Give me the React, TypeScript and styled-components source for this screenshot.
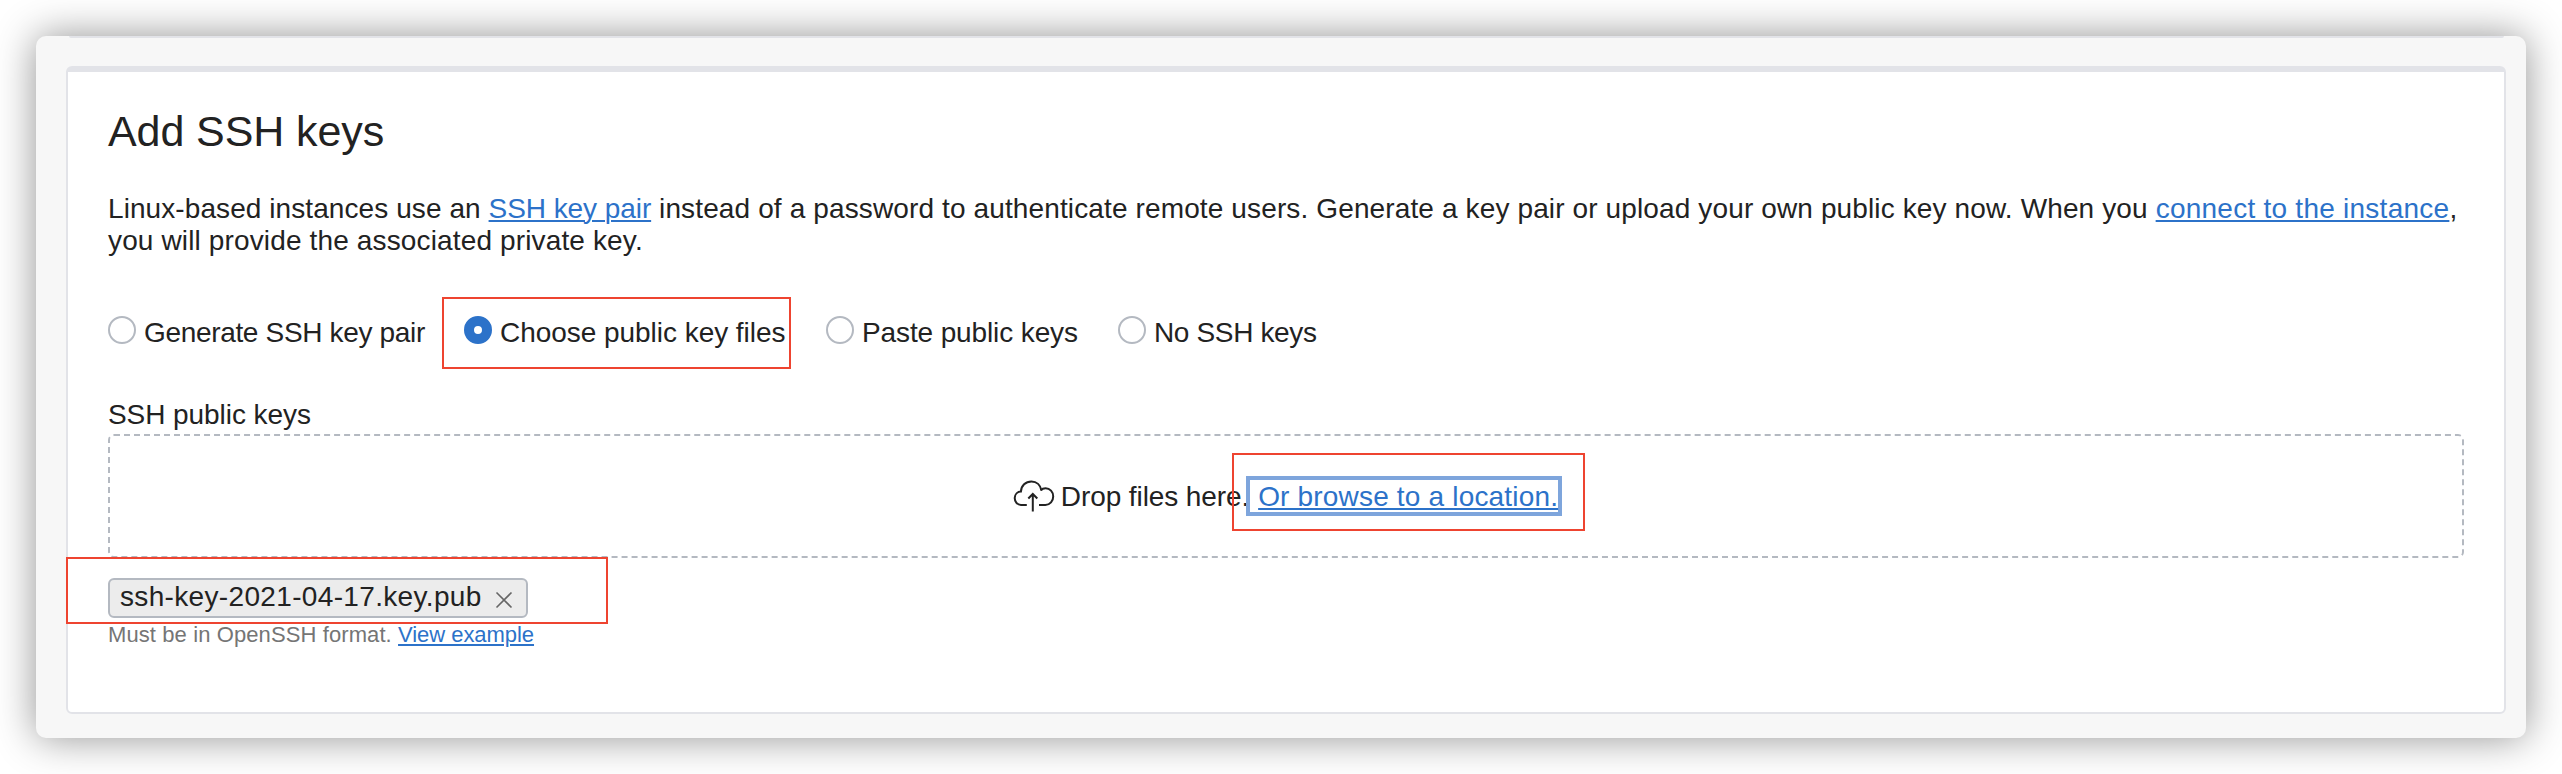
import React from "react";
import styled, { createGlobalStyle, css } from "styled-components";

const colors = {
  text: "#222222",
  link: "#2c72c9",
  frame: "#e2e3e8",
  control: "#b4b9c1",
  mark: "#ee4430",
};

const GlobalStyle = createGlobalStyle`
  * { box-sizing: border-box; }
  body {
    margin: 0;
    background: #ffffff;
    color: ${colors.text};
    font-family: "Liberation Sans", Arial, sans-serif;
    font-size: 28px;
    line-height: 32px;
  }
`;

const Page = styled.div`
  height: 774px;
  padding: 36px;
  overflow: hidden;
`;

const Window = styled.main`
  height: 702px;
  padding: 0 20px 24px 30px;
  border-radius: 10px;
  background: #f7f7f7;
  box-shadow: 0 0 40px rgba(0, 0, 0, 0.43);
`;

const PreviousPanelEdge = styled.div`
  height: 2px;
  margin: 0 2px 28px 3px;
  border-radius: 0 0 4px 4px;
  background: ${colors.frame};
`;

const Card = styled.section`
  height: 648px;
  padding: 34px 40px 0;
  border: 2px solid ${colors.frame};
  border-top-width: 6px;
  border-radius: 6px;
  background: #ffffff;
`;

const Title = styled.h1`
  margin: 0 0 37px;
  font-size: 43px;
  font-weight: 400;
  line-height: 50px;
  letter-spacing: -0.1px;
`;

const Intro = styled.p`
  margin: 0 0 59px;
  white-space: nowrap;
`;

const Text = styled.span<{ $tracking?: number }>`
  letter-spacing: ${(p) => p.$tracking ?? 0}px;
  white-space: pre;
`;

const Link = styled.a<{ $tracking?: number }>`
  color: ${colors.link};
  letter-spacing: ${(p) => p.$tracking ?? 0}px;
  white-space: pre;
  text-decoration: underline;
  text-decoration-thickness: 2px;
  text-underline-offset: 2px;
`;

const RadioRow = styled.div`
  display: grid;
  grid-template-columns: 356px 362px 292px auto;
  margin-bottom: 50px;
`;

const RadioOption = styled.label`
  position: relative;
  display: flex;
  align-items: flex-start;
  gap: 8px;
  height: 32px;
`;

const RadioText = styled(Text)`
  padding-top: 1px;
`;

const RadioMark = styled.span<{ $checked?: boolean }>`
  width: 28px;
  height: 28px;
  flex: none;
  border: 2px solid ${colors.control};
  border-radius: 50%;
  background: #ffffff;
  ${(p) =>
    p.$checked &&
    css`
      border: 10px solid ${colors.link};
    `}
`;

const Callout = styled.span<{ $left: number; $top: number; $width: number; $height: number }>`
  position: absolute;
  left: ${(p) => p.$left}px;
  top: ${(p) => p.$top}px;
  width: ${(p) => p.$width}px;
  height: ${(p) => p.$height}px;
  border: 2px solid ${colors.mark};
  pointer-events: none;
`;

const FieldLabel = styled.div`
  padding-top: 1px;
  margin-bottom: 3px;
`;

const DropZone = styled.div`
  display: flex;
  align-items: center;
  justify-content: center;
  height: 124px;
  margin-bottom: 20px;
  padding-left: 3px;
  border: 2px dashed ${colors.control};
  border-radius: 6px;
`;

const CloudIcon = styled.svg`
  width: 42px;
  height: 34px;
  margin-right: 6px;
  flex: none;
`;

const DropText = styled(Text)`
  padding-top: 2px;
`;

const FocusRing = styled.span`
  position: relative;
  display: flex;
  height: 40px;
  margin-left: -3px;
  padding: 1px 0 0 8px;
  border: 4px solid #7ea5dc;
`;

const FileRow = styled.div`
  position: relative;
  display: flex;
  margin-bottom: 4px;
`;

const FileChip = styled.div`
  display: flex;
  width: 420px;
  height: 40px;
  justify-content: space-between;
  padding: 1px 13px 0 10px;
  border: 2px solid ${colors.control};
  border-radius: 6px;
  background: #ececec;
`;

const RemoveIcon = styled.svg`
  width: 18px;
  height: 18px;
  margin-top: 10px;
`;

const Hint = styled.div`
  color: #757575;
  font-size: 22px;
  line-height: 26px;
`;

interface Option {
  label: string;
  tracking: number;
  checked?: boolean;
}

const options: Option[] = [
  { label: "Generate SSH key pair", tracking: -0.33 },
  { label: "Choose public key files", tracking: -0.04, checked: true },
  { label: "Paste public keys", tracking: -0.12 },
  { label: "No SSH keys", tracking: -0.35 },
];

export default function App() {
  return (
    <>
      <GlobalStyle />
      <Page>
        <Window>
          <PreviousPanelEdge />
          <Card>
            <Title>Add SSH keys</Title>
            <Intro>
              <Text $tracking={0.08}>{"Linux-based instances use an "}</Text>
              <Link $tracking={-0.07}>SSH key pair</Link>
              <Text $tracking={0.128}>
                {" instead of a password to authenticate remote users. Generate a key pair or upload your own public key now. When you "}
              </Text>
              <Link $tracking={0.25}>connect to the instance</Link>
              <Text>,</Text>
              <br />
              <Text $tracking={0.14}>you will provide the associated private key.</Text>
            </Intro>

            <RadioRow>
              {options.map((o) => (
                <RadioOption key={o.label}>
                  <RadioMark $checked={o.checked} />
                  <RadioText $tracking={o.tracking}>{o.label}</RadioText>
                  {o.checked && <Callout $left={-22} $top={-19} $width={349} $height={72} />}
                </RadioOption>
              ))}
            </RadioRow>

            <FieldLabel>
              <Text $tracking={-0.07}>SSH public keys</Text>
            </FieldLabel>
            <DropZone>
              <CloudIcon viewBox="0 0 42 34" fill="none" stroke={colors.text} strokeWidth="2">
                <path d="M13.8 25.9H8C4.2 25.9 1.7 22.6 1.7 19.1C1.7 15.6 4.3 12.8 7.9 12.6C8.2 6.6 12.6 2.4 18.4 2.4C23.6 2.4 27.5 6 28.5 11.5" />
                <path d="M27.7 11.3C28.9 9.9 30.7 9.2 32.6 9.2C37 9.2 40.2 13.1 40.2 17.4C40.2 22 37 25.9 32.4 25.9H26" />
                <path d="M19.8 15V32.5M15.3 19.5L19.8 15L24.3 19.5" />
              </CloudIcon>
              <DropText $tracking={-0.1}>Drop files here.</DropText>
              <FocusRing>
                <Link $tracking={0.18}>Or browse to a location.</Link>
                <Callout $left={-18} $top={-27} $width={353} $height={78} />
              </FocusRing>
            </DropZone>

            <FileRow>
              <FileChip>
                <Text $tracking={0.34}>ssh-key-2021-04-17.key.pub</Text>
                <RemoveIcon viewBox="0 0 18 18" fill="none" stroke="#666666" strokeWidth="1.6">
                  <path d="M1.5 1.5L16.5 16.5M16.5 1.5L1.5 16.5" />
                </RemoveIcon>
              </FileChip>
              <Callout $left={-42} $top={-21} $width={542} $height={67} />
            </FileRow>
            <Hint>
              <Text $tracking={0.1}>{"Must be in OpenSSH format. "}</Text>
              <Link $tracking={-0.05}>View example</Link>
            </Hint>
          </Card>
        </Window>
      </Page>
    </>
  );
}
